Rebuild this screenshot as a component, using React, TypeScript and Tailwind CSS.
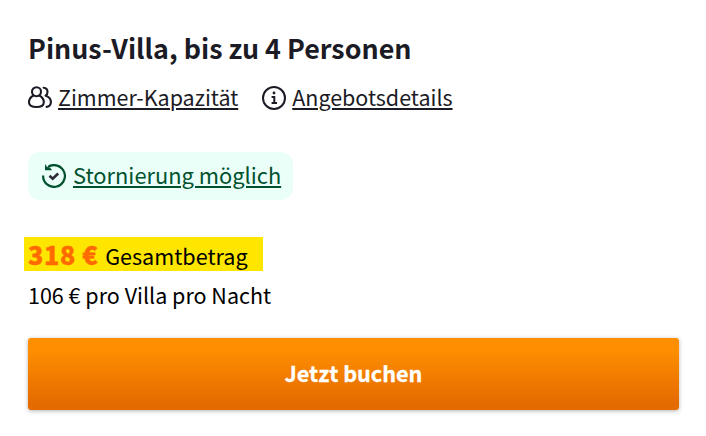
import type { ReactNode } from "react";

function PeopleIcon() {
  return (
    <svg className="w-6 h-6 shrink-0 translate-y-px" viewBox="0 0 24 24" fill="none" stroke="currentColor" strokeWidth="2.100" strokeLinecap="round" strokeLinejoin="round">
      <circle cx="8.500" cy="5.700" r="4.500" />
      <path d="M5.600 9.500C2.600 11 1 13.500 1 16.200c0 3.300 3 4.800 7.400 4.800s7.400-1.500 7.400-4.800c0-2.700-1.600-5.200-4.600-6.700" />
      <path d="M15.600 1.700c2.300.2 3.900 1.800 3.900 4.200 0 1.500-.7 2.900-1.900 3.800 3.300 1 5.300 3.600 5.300 6.500 0 2.600-1.700 4.200-4.300 4.700" />
    </svg>
  );
}

function InfoIcon() {
  return (
    <svg className="w-6 h-6 shrink-0 translate-y-px" viewBox="0 0 24 24" fill="none" stroke="currentColor" strokeWidth="2">
      <circle cx="12" cy="12" r="11" />
      <path d="M9.600 11h2.700v6M9.600 17h5.400" />
      <circle cx="12" cy="7" r="1.400" fill="currentColor" stroke="none" />
    </svg>
  );
}

function CancelIcon() {
  return (
    <svg className="w-6 h-6 shrink-0" viewBox="0 0 24 24" fill="none" strokeWidth="2.200">
      <path d="M1.100 11.500A10.900 10.900 0 1 0 6 2.900" stroke="#00522f" />
      <path d="M3 0v6.200h7L8 3.600 5 3z" fill="#00522f" />
      <path d="M7.500 11.800l3.200 3 5.500-5.300" stroke="#2b2a36" strokeWidth="2.600" />
    </svg>
  );
}

function DetailLink({ icon, children }: { icon: ReactNode; children: ReactNode }) {
  return (
    <a href="#" className="flex items-center gap-1.5">
      {icon}
      <span className="underline decoration-2 underline-offset-2">{children}</span>
    </a>
  );
}

export default function App() {
  return (
    <main className="w-[706px] h-[436px] bg-white pl-7 pr-[27px] pt-8 text-[21.6px] leading-8 text-[#1b1b25] font-['Noto_Sans_CJK_SC','Noto_Sans',sans-serif]">
      <h2 className="text-[26.85px] font-bold">Pinus-Villa, bis zu 4 Personen</h2>

      <div className="mt-[17px] flex gap-6 text-[21.48px]">
        <DetailLink icon={<PeopleIcon />}>Zimmer-Kapazität</DetailLink>
        <DetailLink icon={<InfoIcon />}>Angebotsdetails</DetailLink>
      </div>

      {/* Cancellation badge */}
      <a href="#" className="mt-[39px] flex h-12 w-[265px] items-center gap-[7px] rounded-xl bg-[#eafff8] pl-3.5 text-[21.85px] text-[#00522f]">
        <CancelIcon />
        <span className="-mt-0.5 underline decoration-2 underline-offset-2">Stornierung möglich</span>
      </a>

      {/* Price */}
      <div className="-ml-1 mt-[37px] flex h-[34px] w-[239px] items-baseline gap-[7px] bg-[#ffe600] pl-1 text-black">
        <strong className="text-[25.2px] font-black leading-[34px] tracking-[0.6px] text-[#ff6b00] [-webkit-text-stroke:0.4px_#ff6b00]">318 €</strong>
        <span>Gesamtbetrag</span>
      </div>
      <p className="mt-2 text-[21.5px] text-black">106 € pro Villa pro Nacht</p>

      <button className="mt-[27px] block h-[72px] w-full rounded-[3px] bg-linear-to-b from-[#ff8f00] from-15% to-[#e46b00] to-90% pb-0.5 font-bold text-white shadow-[0_1px_4px_rgba(0,0,0,0.3)] [-webkit-text-stroke:0.3px_white]">
        Jetzt buchen
      </button>
    </main>
  );
}
